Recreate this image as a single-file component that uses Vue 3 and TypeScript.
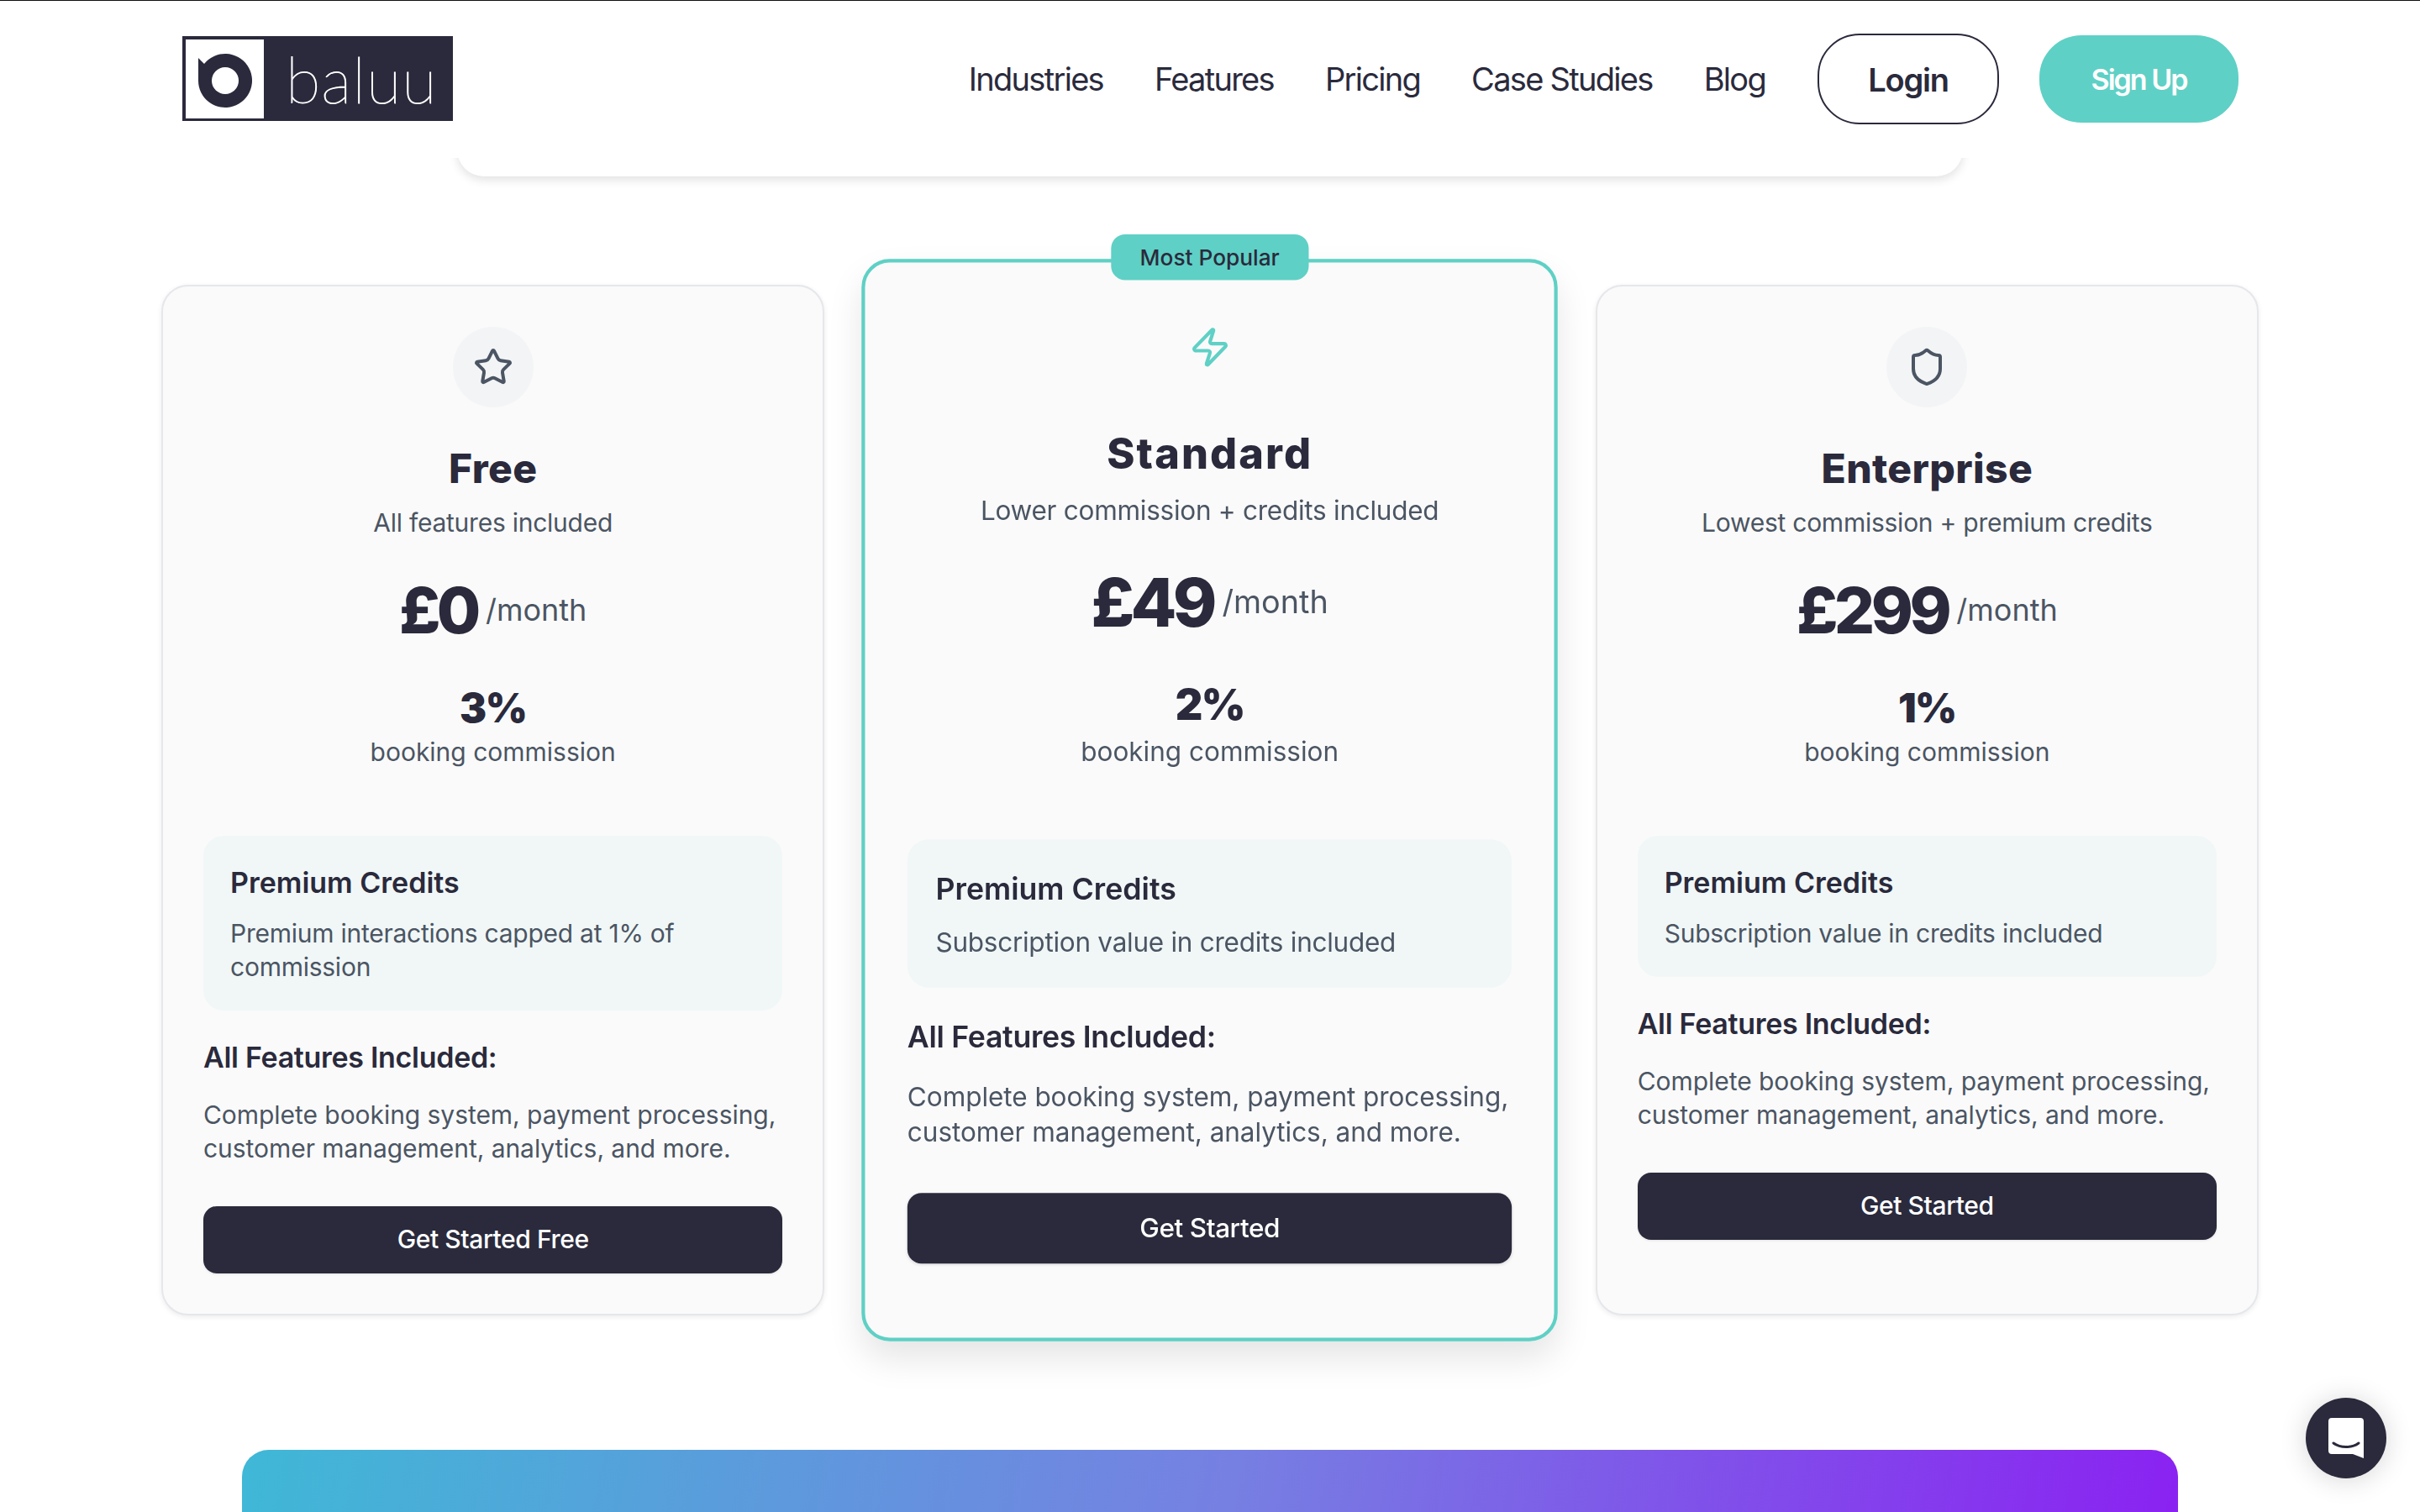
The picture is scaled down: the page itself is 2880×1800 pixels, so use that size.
<script setup lang="ts">
interface Plan {
  name: string
  tagline: string
  price: string
  commission: string
  icon: string
  credits: string
  cta: string
  featured?: boolean
}

const navLinks = ['Industries', 'Features', 'Pricing', 'Case Studies', 'Blog']

const starPath =
  'M11.525 2.295a.53.53 0 0 1 .95 0l2.31 4.679a2.123 2.123 0 0 0 1.595 1.16l5.166.756a.53.53 0 0 1 .294.904l-3.736 3.638a2.123 2.123 0 0 0-.611 1.878l.882 5.14a.53.53 0 0 1-.771.56l-4.618-2.428a2.122 2.122 0 0 0-1.973 0L6.396 21.01a.53.53 0 0 1-.77-.56l.881-5.139a2.122 2.122 0 0 0-.611-1.879L2.16 9.795a.53.53 0 0 1 .294-.906l5.165-.755a2.122 2.122 0 0 0 1.597-1.16z'
const zapPath =
  'M4 14a1 1 0 0 1-.78-1.63l9.9-10.2a.5.5 0 0 1 .86.46l-1.92 6.02A1 1 0 0 0 13 10h7a1 1 0 0 1 .78 1.63l-9.9 10.2a.5.5 0 0 1-.86-.46l1.92-6.02A1 1 0 0 0 11 14z'
const shieldPath =
  'M20 13c0 5-3.5 7.5-7.66 8.95a1 1 0 0 1-.67-.01C7.5 20.5 4 18 4 13V6a1 1 0 0 1 1-1c2 0 4.5-1.2 6.24-2.72a1.17 1.17 0 0 1 1.52 0C14.51 3.81 17 5 19 5a1 1 0 0 1 1 1z'

const plans: Plan[] = [
  {
    name: 'Free',
    tagline: 'All features included',
    price: '£0',
    commission: '3%',
    icon: starPath,
    credits: 'Premium interactions capped at 1% of commission',
    cta: 'Get Started Free',
  },
  {
    name: 'Standard',
    tagline: 'Lower commission + credits included',
    price: '£49',
    commission: '2%',
    icon: zapPath,
    credits: 'Subscription value in credits included',
    cta: 'Get Started',
    featured: true,
  },
  {
    name: 'Enterprise',
    tagline: 'Lowest commission + premium credits',
    price: '£299',
    commission: '1%',
    icon: shieldPath,
    credits: 'Subscription value in credits included',
    cta: 'Get Started',
  },
]
</script>

<template>
  <div class="page">
    <header class="header">
      <a class="logo">
        <span class="logo-mark">
          <svg width="93" height="94" viewBox="0 0 93 94">
            <path d="M15 49V22L22 29A32 32 0 1 1 15 49Z" fill="#2b2a3c" />
            <circle cx="47" cy="49" r="16" fill="#fff" />
          </svg>
        </span>
        <span class="logo-text">baluu</span>
      </a>
      <nav class="nav">
        <a v-for="link in navLinks" :key="link" class="nav-link">{{ link }}</a>
        <a class="btn-login">Login</a>
        <a class="btn-signup">Sign Up</a>
      </nav>
    </header>
    <div class="panel"></div>

    <main class="plans">
      <article
        v-for="plan in plans"
        :key="plan.name"
        class="card"
        :class="{ featured: plan.featured }"
      >
        <span v-if="plan.featured" class="badge">Most Popular</span>
        <div class="icon-wrap">
          <svg
            width="48"
            height="48"
            viewBox="0 0 24 24"
            fill="none"
            stroke="currentColor"
            stroke-width="2"
            stroke-linecap="round"
            stroke-linejoin="round"
          >
            <path :d="plan.icon" />
          </svg>
        </div>
        <h3 class="name">{{ plan.name }}</h3>
        <p class="tagline">{{ plan.tagline }}</p>
        <div class="price-row">
          <span class="price">{{ plan.price }}</span>
          <span class="per">/month</span>
        </div>
        <div class="commission">{{ plan.commission }}</div>
        <div class="commission-label">booking commission</div>
        <div class="credits">
          <h4 class="credits-title">Premium Credits</h4>
          <p class="body-text credits-text">{{ plan.credits }}</p>
        </div>
        <h4 class="features-title">All Features Included:</h4>
        <p class="body-text features-text">
          Complete booking system, payment processing, customer management, analytics, and more.
        </p>
        <button class="cta">{{ plan.cta }}</button>
      </article>
    </main>

    <section class="banner"></section>

    <button class="chat" aria-label="Open chat">
      <svg width="42" height="48" viewBox="0 0 42 48">
        <path d="M4 0H38a4 4 0 0 1 4 4V48L29 43H4a4 4 0 0 1-4-4V4a4 4 0 0 1 4-4Z" fill="#fff" />
        <path
          d="M6 30C14 36 28 36 36 30"
          fill="none"
          stroke="#2a2a3c"
          stroke-width="3"
          stroke-linecap="round"
        />
      </svg>
    </button>
  </div>
</template>

<style>
html,
body {
  margin: 0;
  background: #fff;
  overflow: hidden;
}
</style>

<style scoped>
* {
  box-sizing: border-box;
}
.page {
  position: relative;
  width: 2880px;
  height: 1800px;
  overflow: hidden;
  background: #fff;
  border-top: 1px solid #111;
  font-family: Inter, 'Noto Sans', sans-serif;
  color: #2a2a3c;
}
.header {
  position: relative;
  z-index: 2;
  height: 187px;
  padding: 39px 216px 0 217px;
  display: flex;
  justify-content: space-between;
  align-items: flex-start;
  background: #fff;
}
.logo {
  margin-top: 3px;
  width: 322px;
  height: 101px;
  padding: 4px 0 3px 4px;
  display: flex;
  background: #2b2a3c;
}
.logo-mark {
  width: 93px;
  height: 94px;
  background: #fff;
  flex: none;
}
.logo-mark svg {
  display: block;
}
.logo-text {
  margin: 0 0 0 26px;
  font-family: Lato, sans-serif;
  font-weight: 100;
  font-size: 76px;
  line-height: 94px;
  color: #fff;
  -webkit-text-stroke: 1px #fff;
  letter-spacing: 1px;
}
.nav {
  display: flex;
  align-items: center;
  height: 108px;
}
.nav-link {
  font-size: 38px;
  font-weight: 400;
  letter-spacing: -1.7px;
  margin-right: 61px;
  white-space: nowrap;
}
.btn-login {
  width: 216px;
  height: 108px;
  margin-left: 1px;
  padding-top: 2px;
  border: 2px solid #2a2a3c;
  border-radius: 50px;
  display: flex;
  align-items: center;
  justify-content: center;
  font-size: 38px;
  font-weight: 600;
  letter-spacing: -1.2px;
}
.btn-signup {
  width: 237px;
  height: 104px;
  margin-left: 48px;
  border-radius: 50px;
  display: flex;
  align-items: center;
  justify-content: center;
  background: #5fd0c5;
  color: #fff;
  font-size: 34px;
  font-weight: 600;
  letter-spacing: -2px;
}
.panel {
  position: relative;
  z-index: 1;
  width: 1792px;
  height: 82px;
  margin: -60px auto 0;
  background: #fff;
  border-radius: 0 0 32px 32px;
  box-shadow: 0 4px 12px rgba(0, 0, 0, 0.12);
}
.plans {
  width: 2496px;
  margin: 129px auto 0;
  display: grid;
  grid-template-columns: repeat(3, 1fr);
  gap: 64px;
}
.card {
  position: relative;
  padding: 48px;
  border: 2px solid #e5e7eb;
  border-radius: 32px;
  background: #fafafa;
  box-shadow: 0 2px 6px rgba(0, 0, 0, 0.08);
  display: flex;
  flex-direction: column;
}
.card.featured {
  border: 4px solid #5fd0c5;
  transform: scale(1.05);
  box-shadow: 0 20px 40px rgba(0, 0, 0, 0.1);
  z-index: 1;
}
.badge {
  position: absolute;
  top: -32px;
  left: 50%;
  transform: translateX(-50%);
  padding: 6px 33px;
  border-radius: 16px;
  background: #5fd0c5;
  font-size: 25px;
  line-height: 40px;
  font-weight: 500;
  white-space: nowrap;
}
.icon-wrap {
  width: 96px;
  height: 96px;
  margin: 0 auto;
  border-radius: 50%;
  display: flex;
  align-items: center;
  justify-content: center;
  background: #f3f4f6;
  color: #4b5563;
}
.featured .icon-wrap {
  background: transparent;
  color: #5fd0c5;
}
.name {
  margin: 41px 0 0;
  font-size: 48px;
  line-height: 64px;
  font-weight: 800;
  letter-spacing: 0.4px;
  text-align: center;
}
.featured .name {
  letter-spacing: 2px;
}
.tagline {
  margin: 12px 0 0;
  font-size: 30px;
  line-height: 40px;
  letter-spacing: -0.25px;
  color: #4b5563;
  text-align: center;
}
.price-row {
  margin-top: 36px;
  display: flex;
  justify-content: center;
  align-items: center;
  gap: 10px;
  height: 96px;
}
.price {
  font-size: 76px;
  font-weight: 800;
  line-height: 96px;
  letter-spacing: -4.5px;
}
.per {
  font-size: 36px;
  color: #4b5563;
}
.commission {
  margin-top: 41px;
  font-size: 48px;
  line-height: 56px;
  font-weight: 900;
  letter-spacing: -1.5px;
  text-align: center;
}
.commission-label {
  margin-top: 4px;
  font-size: 30px;
  line-height: 40px;
  color: #4b5563;
  text-align: center;
}
.credits {
  margin-top: 80px;
  padding: 32px;
  border-radius: 24px;
  background: #f1f7f7;
}
.credits-title,
.features-title {
  margin: 0;
  font-size: 34px;
  line-height: 48px;
  font-weight: 600;
}
.body-text {
  margin: 0;
  font-size: 30px;
  line-height: 40px;
  color: #4b5563;
}
.credits-text {
  margin-top: 16px;
  letter-spacing: -0.25px;
}
.features-title {
  margin-top: 32px;
  letter-spacing: -0.3px;
}
.features-text {
  margin-top: 24px;
  letter-spacing: -0.05px;
}
.cta {
  margin-top: 49px;
  height: 80px;
  padding: 0 0 2px;
  border: 0;
  border-radius: 16px;
  background: #2a2a3c;
  color: #fff;
  font-family: inherit;
  font-size: 30px;
  font-weight: 500;
  letter-spacing: -0.4px;
  box-shadow: 0 1px 3px rgba(0, 0, 0, 0.1);
}
.banner {
  width: 2304px;
  height: 300px;
  margin: 160px auto 0;
  border-radius: 32px;
  background: linear-gradient(100deg, #3fb8d6, #7680e2 50%, #8b1ff2);
}
.chat {
  position: absolute;
  right: 40px;
  bottom: 40px;
  width: 96px;
  height: 96px;
  border: 0;
  padding: 0;
  border-radius: 50%;
  background: #2a2a3c;
  display: flex;
  align-items: center;
  justify-content: center;
  box-shadow: 0 2px 32px rgba(0, 0, 0, 0.16);
}
</style>
